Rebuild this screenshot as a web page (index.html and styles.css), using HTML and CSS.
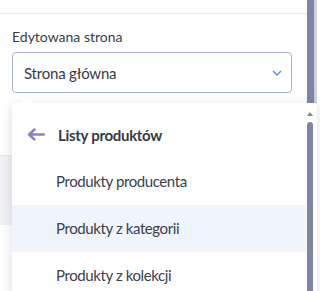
FILE: index.html
```html
<!DOCTYPE html>
<html lang="pl">
<head>
  <meta charset="UTF-8" />
  <meta name="viewport" content="width=device-width, initial-scale=1.0" />
  <title>Edytowana strona</title>
  <link rel="stylesheet" href="styles.css">
</head>
<body>
  <div class="page">
    <div class="main">
      <div class="topbar"></div>
      <div class="field">
        <label class="field-label">Edytowana strona</label>
        <div class="select">
          <span>Strona główna</span>
          <svg class="chevron" width="10" height="6" viewBox="0 0 10 6"><path d="M1 1l4 4 4-4" fill="none" stroke="#4d8ee6" stroke-width="1.3"/></svg>
        </div>
      </div>
      <div class="section-gap"></div>
      <div class="section-row"></div>
    </div>
    <div class="page-scroll">
      <div class="page-thumb"></div>
      <div class="page-edge"></div>
    </div>
  </div>

  <div class="dropdown">
    <div class="notch"></div>
    <div class="list">
      <div class="list-head">
        <svg class="back" width="18" height="13" viewBox="0 0 18 13"><path d="M17 6.5H2M7.5 1.5l-5.5 5 5.5 5" fill="none" stroke="#8b80c4" stroke-width="2.4" stroke-linecap="round" stroke-linejoin="round"/></svg>
        <span>Listy produktów</span>
      </div>
      <div class="item">Produkty producenta</div>
      <div class="item active">Produkty z kategorii</div>
      <div class="item">Produkty z kolekcji</div>
    </div>
    <div class="list-scroll">
      <div class="scroll-up"></div>
      <div class="scroll-thumb"></div>
    </div>
  </div>
</body>
</html>
```

FILE: styles.css
```css
body {
  margin: 0;
  font-family: "Source Sans Pro", Lato, "Noto Sans", sans-serif;
  color: #363a45;
  background: #fff;
  width: 320px;
  height: 291px;
  overflow: hidden;
  position: relative;
}
.page {
  display: flex;
  height: 291px;
}
.main {
  width: 307px;
}
.topbar {
  height: 13px;
  border-bottom: 1px solid #e8e9ed;
}
.field {
  padding: 13px 15px 0 12px;
}
.field-label {
  display: block;
  font-size: 14px;
  line-height: 20px;
  color: #3a3d46;
  margin-bottom: 5px;
}
.select {
  height: 38px;
  border: 1px solid #a9b3cf;
  border-radius: 4px;
  display: flex;
  align-items: center;
  justify-content: space-between;
  padding: 1px 9px 0 11px;
  font-size: 15px;
  letter-spacing: -0.2px;
}
.section-gap {
  height: 62px;
  border-bottom: 1px solid #e6e7eb;
}
.section-row {
  height: 69px;
  background: #f1f2f5;
}
.page-scroll {
  display: flex;
  height: 103px;
}
.page-thumb {
  width: 7px;
  background: #7d85a2;
}
.page-edge {
  width: 3px;
  background: #cdd1dc;
}

.dropdown {
  position: absolute;
  left: 12px;
  top: 103px;
  width: 305px;
  height: 200px;
  background: #fff;
  box-shadow: 0 2px 10px rgba(40, 45, 70, 0.16);
  display: flex;
}
.notch {
  position: absolute;
  left: 8px;
  top: -6px;
  width: 0;
  height: 0;
  border-left: 7px solid transparent;
  border-right: 7px solid transparent;
  border-bottom: 6px solid #fff;
}
.list {
  width: 295px;
  padding-top: 8px;
}
.list-head {
  height: 47px;
  display: flex;
  align-items: center;
  padding-left: 15px;
  font-size: 15px;
  font-weight: bold;
  letter-spacing: -0.3px;
  color: #363a45;
}
.back {
  margin-right: 13px;
}
.item {
  height: 47px;
  line-height: 47px;
  padding-left: 44px;
  font-size: 15px;
  letter-spacing: -0.4px;
  color: #3c404b;
}
.item.active {
  background: #f0f4fc;
}
.list-scroll {
  width: 10px;
  padding-top: 9px;
  padding-left: 1px;
}
.scroll-up {
  width: 0;
  height: 0;
  border-left: 3.5px solid transparent;
  border-right: 3.5px solid transparent;
  border-bottom: 4px solid #7d85a2;
}
.scroll-thumb {
  margin-top: 6px;
  width: 6px;
  height: 180px;
  border-radius: 3px 3px 0 0;
  background: #7d85a2;
}
```
